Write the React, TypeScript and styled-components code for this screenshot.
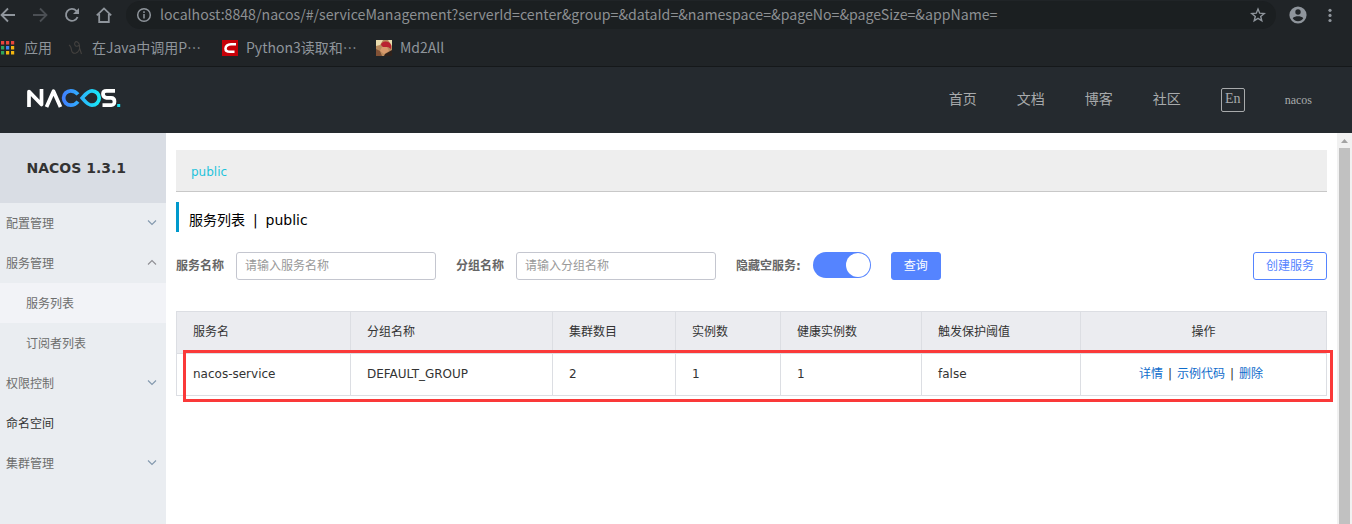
import React from 'react';
import styled, { createGlobalStyle } from 'styled-components';

const GlobalStyle = createGlobalStyle`
  *, *::before, *::after { box-sizing: border-box; }
  body { margin: 0; overflow: hidden; background: #fff; }
`;

const Page = styled.div`
  width: 1352px;
  height: 524px;
  display: flex;
  flex-direction: column;
  overflow: hidden;
  font: 12px/20px 'DejaVu Sans', 'Noto Sans CJK SC', sans-serif;
  color: #333;
`;

/* Browser chrome */
const Browser = styled.div`
  height: 67px;
  flex: none;
  background: #202427;
  border-bottom: 1px solid #15181a;
  font-family: 'Noto Sans CJK SC', sans-serif;
  font-size: 14px;
  color: #8f959b;
`;

const Toolbar = styled.div`
  height: 30px;
  display: flex;
  align-items: center;
`;

const ToolIcon = styled.svg<{ $ml?: number; $dim?: boolean; $size?: number; $stroke?: number }>`
  flex: none;
  width: ${p => p.$size ?? 16}px;
  height: ${p => p.$size ?? 16}px;
  margin-left: ${p => p.$ml ?? 0}px;
  color: ${p => (p.$dim ? '#4b4f54' : '#8f959c')};
  fill: none;
  stroke: currentColor;
  stroke-width: ${p => p.$stroke ?? 1.8};
`;

const AddressBar = styled.div`
  width: 1150px;
  height: 28px;
  margin: 0 0 0 14px;
  padding: 0 10px 0 10px;
  border-radius: 14px;
  background: #1b1f21;
  display: flex;
  align-items: center;
`;

const Url = styled.span`
  flex: 1;
  margin-left: 8px;
  padding-bottom: 2px;
  font-size: 14.15px;
  line-height: 20px;
  white-space: nowrap;
  color: #8d9093;
`;

const Bookmarks = styled.div`
  height: 36px;
  display: flex;
  align-items: center;
`;

const Bookmark = styled.div<{ $gap: number; $w: number }>`
  display: flex;
  align-items: center;
  gap: ${p => p.$gap}px;
  width: ${p => p.$w}px;
  flex: none;
  white-space: nowrap;
`;

const BookmarkText = styled.span`
  line-height: 20px;
  padding-bottom: 2px;
`;

const Favicon = styled.svg<{ $w?: number }>`
  width: ${p => p.$w ?? 16}px;
  height: 16px;
  flex: none;
`;

/* Site header */
const Header = styled.header`
  height: 66px;
  flex: none;
  display: flex;
  align-items: center;
  justify-content: space-between;
  padding: 0 40px 0 27px;
  background: #252a2f;
`;

const Logo = styled.svg`
  width: 94px;
  height: 20px;
  margin-top: -4px;
`;

const Nav = styled.nav`
  display: flex;
  align-items: center;
  gap: 40px;
  font: 14px/20px 'Liberation Serif', 'Noto Sans CJK SC', serif;
  color: #a8aaac;
`;

const NavItem = styled.span<{ $small?: boolean }>`
  font-size: ${p => (p.$small ? 12 : 14)}px;
`;

const Language = styled.span`
  width: 24px;
  height: 24px;
  border: 1px solid #a8aaac;
  border-radius: 2px;
  line-height: 20px;
  text-align: center;
`;

/* Body */
const Body = styled.div`
  flex: 1;
  min-height: 0;
  display: flex;
`;

const Sidebar = styled.aside`
  width: 166px;
  flex: none;
  background: #eaedf1;
`;

const Version = styled.div`
  height: 70px;
  padding-left: 26.5px;
  background: #d9dde4;
  font-size: 14px;
  font-weight: bold;
  line-height: 70px;
`;

const MenuItem = styled.div<{ $sub?: boolean; $active?: boolean; $dark?: boolean }>`
  height: 40px;
  padding: 0 9px 0 ${p => (p.$sub ? 26 : 6)}px;
  display: flex;
  justify-content: space-between;
  line-height: 42px;
  background: ${p => (p.$active ? '#f2f3f7' : 'transparent')};
  color: ${p => (p.$dark ? '#333' : '#6d6d6d')};
`;

const Chevron = styled.svg<{ $up?: boolean }>`
  width: 10px;
  height: 7px;
  margin-top: 16px;
  fill: none;
  stroke: ${p => (p.$up ? '#8e8e93' : '#8398ad')};
  stroke-width: 1.1;
  transform: ${p => (p.$up ? 'rotate(180deg)' : 'none')};
`;

const Main = styled.main`
  flex: 1;
  padding: 17px 10px 0;
`;

const Namespace = styled.div`
  height: 42px;
  padding-left: 15px;
  border-bottom: 1px solid #c8c8c8;
  background: #eee;
  line-height: 45px;
  color: #1fc3db;
`;

const Title = styled.div`
  height: 30px;
  margin: 10px 0 20px;
  padding-left: 10px;
  border-left: 3px solid #09c;
  font-size: 14px;
  line-height: 37px;
  color: #000;
  white-space: pre;
  word-spacing: -0.5px;
`;

const Filters = styled.div`
  height: 28px;
  display: flex;
  align-items: center;
  margin-bottom: 31px;
`;

const Label = styled.span`
  margin-right: 12px;
  line-height: 28px;
  height: 28px;
  font-weight: bold;
  color: #666;
`;

const Input = styled.input`
  width: 200px;
  height: 28px;
  margin: 0 20px 0 0;
  padding: 0 8px;
  border: 1px solid #c4c6cf;
  border-radius: 3px;
  outline: none;
  font: inherit;
  &::placeholder { color: #999; opacity: 1; }
`;

const Switch = styled.span`
  width: 58px;
  height: 26px;
  margin: 0 20px 2px 0;
  padding: 1px;
  border-radius: 13px;
  background: #5584ff;
  display: flex;
  justify-content: flex-end;
  &::after {
    content: '';
    width: 24px;
    border-radius: 50%;
    background: #fff;
  }
`;

const Button = styled.button<{ $outline?: boolean }>`
  height: 28px;
  width: ${p => (p.$outline ? 74 : 50)}px;
  margin: 0 0 0 ${p => (p.$outline ? 'auto' : '0')};
  padding: 0 0 1px;
  border: 1px solid #5584ff;
  border-radius: 3px;
  background: ${p => (p.$outline ? '#fff' : '#5584ff')};
  color: ${p => (p.$outline ? '#5584ff' : '#fff')};
  font: inherit;
`;

const Table = styled.div`
  position: relative;
  border-right: 1px solid #dcdee3;
  border-bottom: 1px solid #dcdee3;
`;

const Row = styled.div<{ $head?: boolean }>`
  display: grid;
  grid-template-columns: 174px 202px 123px 105px 141px 159px 1fr;
  height: 42px;
  background: ${p => (p.$head ? '#ebecf0' : '#fff')};
`;

const Cell = styled.div<{ $center?: boolean }>`
  padding: 0 16px;
  border-top: 1px solid #dcdee3;
  border-left: 1px solid #dcdee3;
  line-height: 41px;
  white-space: pre;
  text-align: ${p => (p.$center ? 'center' : 'left')};
`;

const Actions = styled.span`
  padding-right: 5px;
  word-spacing: 1.2px;
`;

const Link = styled.a`
  color: #0f6ccb;
`;

const Highlight = styled.div`
  position: absolute;
  left: 7px;
  top: 39px;
  width: 1150px;
  height: 52px;
  border: 3px solid #fa3939;
`;

const Scrollbar = styled.div`
  width: 15px;
  flex: none;
  padding: 0 2px;
  background: #f1f1f1;
  display: flex;
  flex-direction: column;
`;

const ScrollArrow = styled.svg`
  width: 11px;
  height: 15px;
  flex: none;
`;

const Thumb = styled.div`
  flex: 1;
  background: #c1c1c1;
`;

const appColors = ['#e8453c', '#e8453c', '#e8453c', '#2fa35a', '#3c85f0', '#f2b50f', '#2fa35a', '#f2b50f', '#f2b50f'];

const menu = [
  { text: '配置管理', arrow: 'down' },
  { text: '服务管理', arrow: 'up' },
  { text: '服务列表', sub: true, active: true },
  { text: '订阅者列表', sub: true },
  { text: '权限控制', arrow: 'down' },
  { text: '命名空间', dark: true },
  { text: '集群管理', arrow: 'down' },
];

const columns = ['服务名', '分组名称', '集群数目', '实例数', '健康实例数', '触发保护阈值'];
const service = ['nacos-service', 'DEFAULT_GROUP', '2', '1', '1', 'false'];

export default function App() {
  return (
    <Page lang="zh-CN">
      <GlobalStyle />
      <Browser>
        <Toolbar>
          <ToolIcon viewBox="0 0 16 16"><path d="M15 8H2M8 1.5 1.5 8 8 14.5" /></ToolIcon>
          <ToolIcon viewBox="0 0 16 16" $ml={16} $dim><path d="M1 8h13M8 1.5 14.5 8 8 14.5" /></ToolIcon>
          <ToolIcon viewBox="0 0 16 16" $ml={16}>
            <path d="M13.6 10A6 6 0 1 1 12.4 3.8L14 5.6" />
            <path d="M15 1v6H9z" fill="currentColor" stroke="none" />
          </ToolIcon>
          <ToolIcon viewBox="0 0 16 16" $ml={16}><path d="M.8 8.4 8 1.4l7.2 7M3.2 7v8h9.6V7" /></ToolIcon>
          <AddressBar>
            <ToolIcon viewBox="0 0 16 16" $stroke={1.5}>
              <circle cx="8" cy="8" r="6.3" />
              <path d="M8 7v4.5M8 4.3v1.6" />
            </ToolIcon>
            <Url>localhost:8848/nacos/#/serviceManagement?serverId=center&amp;group=&amp;dataId=&amp;namespace=&amp;pageNo=&amp;pageSize=&amp;appName=</Url>
            <ToolIcon viewBox="0 0 16 16" $stroke={1.4}>
              <path d="m8 2 1.7 4.2 4.5.3-3.5 2.9 1.1 4.4L8 11.4l-3.8 2.4 1.1-4.4L1.8 6.5l4.5-.3z" />
            </ToolIcon>
          </AddressBar>
          <ToolIcon viewBox="0 0 18 18" $ml={13} $size={18}>
            <circle cx="9" cy="9" r="8.6" fill="currentColor" stroke="none" />
            <circle cx="9" cy="6" r="2.7" fill="#202427" stroke="none" />
            <path d="M3.7 12.3c1-1.5 3.5-2 5.3-2s4.3.5 5.3 2a6.3 6.3 0 0 1-10.6 0z" fill="#202427" stroke="none" />
          </ToolIcon>
          <ToolIcon viewBox="0 0 16 16" $ml={15}>
            <g fill="currentColor" stroke="none">
              <circle cx="8" cy="3.3" r="1.6" /><circle cx="8" cy="8.4" r="1.6" /><circle cx="8" cy="13.5" r="1.6" />
            </g>
          </ToolIcon>
        </Toolbar>
        <Bookmarks>
          <Bookmark $gap={9} $w={68}>
            <Favicon viewBox="0 0 15 16" $w={15}>
              {appColors.map((c, i) => (
                <rect key={i} x={1 + (i % 3) * 5} y={1 + Math.floor(i / 3) * 5} width="3.2" height="3.5" fill={c} />
              ))}
            </Favicon>
            <BookmarkText>应用</BookmarkText>
          </Bookmark>
          <Bookmark $gap={8} $w={154}>
            <Favicon viewBox="0 0 16 16" fill="none" stroke="#43413f" strokeWidth="1.1">
              <path d="M1 5q2 1 2.500 5t4.500 3c2.500-.8 4-4 3.500-7.500S8 .8 7 2.500s0 4 2 3.800 2.500-1.500 2.500-1.500M11.500 8l2 6" />
            </Favicon>
            <BookmarkText>在Java中调用P…</BookmarkText>
          </Bookmark>
          <Bookmark $gap={8} $w={154}>
            <Favicon viewBox="0 0 16 16">
              <path d="M0 0h16v16H0z" fill="#c60008" />
              <path d="M14 4.200H9Q3.800 4.500 3.500 8.500q0 3.300 4.500 3.300h4.500" fill="none" stroke="#fff" strokeWidth="2.6" />
            </Favicon>
            <BookmarkText>Python3读取和…</BookmarkText>
          </Bookmark>
          <Bookmark $gap={8} $w={90}>
            <Favicon viewBox="0 0 16 16">
              <path d="M0 0h16v16H0z" fill="#b98a5c" />
              <path d="M0 0h7L4 5 0 6zM12 0h4v6z" fill="#eadcae" />
              <path d="M5 5c0-4 8-5 10 0v4l-3-2-4 1z" fill="#b92330" />
              <path d="M6 7l5 0 2 4-5 3-4-3z" fill="#d79a6c" />
              <path d="M0 9l4 2 2 5H0z" fill="#815135" />
              <path d="M9 14l7-4v6H8z" fill="#2e211b" />
            </Favicon>
            <BookmarkText>Md2All</BookmarkText>
          </Bookmark>
        </Bookmarks>
      </Browser>

      <Header>
        <Logo viewBox="0 0 94 20" fill="none" strokeWidth="3.7">
          <defs>
            <linearGradient id="loop" gradientUnits="userSpaceOnUse" x1="35" y1="0" x2="74" y2="0">
              <stop offset="0" stopColor="#427dff" />
              <stop offset="1" stopColor="#16edf7" />
            </linearGradient>
          </defs>
          <path d="M2 19V3.500L14.500 16.500V1M19.500 19 26.500 3.200 33.500 19" stroke="#fff" strokeLinejoin="round" />
          <path d="M51 13.600C48.800 16.200 46.500 17.200 43.800 17.200a7.200 7.200 0 1 1 0-14.400c2.700 0 5 1 7.200 3.600M65 2.800c-4.300 0-7 4-9.800 7.200 2.800 3.200 5.500 7.200 9.800 7.200a7.200 7.200 0 1 0 0-14.400z" stroke="url(#loop)" />
          <path d="M88 2.900h-8.500q-3.500 0-3.500 3.200t3.500 3.700h4.500q3.500 0 3.500 3.700t-3.500 3.600h-8.500" stroke="#fff" />
          <path d="M90.200 16h3v3h-3z" fill="#16e3f4" />
        </Logo>
        <Nav>
          <NavItem>首页</NavItem>
          <NavItem>文档</NavItem>
          <NavItem>博客</NavItem>
          <NavItem>社区</NavItem>
          <Language>En</Language>
          <NavItem $small>nacos</NavItem>
        </Nav>
      </Header>

      <Body>
        <Sidebar>
          <Version>NACOS 1.3.1</Version>
          {menu.map(m => (
            <MenuItem key={m.text} $sub={m.sub} $active={m.active} $dark={m.dark}>
              {m.text}
              {m.arrow && (
                <Chevron viewBox="0 0 10 7" $up={m.arrow === 'up'}><path d="M1 1.500 5 5.500 9 1.500" /></Chevron>
              )}
            </MenuItem>
          ))}
        </Sidebar>
        <Main>
          <Namespace>public</Namespace>
          <Title>服务列表  |  public</Title>
          <Filters>
            <Label>服务名称</Label>
            <Input placeholder="请输入服务名称" />
            <Label>分组名称</Label>
            <Input placeholder="请输入分组名称" />
            <Label>隐藏空服务:</Label>
            <Switch />
            <Button>查询</Button>
            <Button $outline>创建服务</Button>
          </Filters>
          <Table>
            <Row $head>
              {columns.map(c => <Cell key={c}>{c}</Cell>)}
              <Cell $center>操作</Cell>
            </Row>
            <Row>
              {service.map((v, i) => <Cell key={i}>{v}</Cell>)}
              <Cell $center>
                <Actions><Link>详情</Link> | <Link>示例代码</Link> | <Link>删除</Link></Actions>
              </Cell>
            </Row>
            <Highlight />
          </Table>
        </Main>
        <Scrollbar>
          <ScrollArrow viewBox="0 0 11 15"><path d="M2 10 5.500 6 9 10z" fill="#a3a3a3" /></ScrollArrow>
          <Thumb />
        </Scrollbar>
      </Body>
    </Page>
  );
}
